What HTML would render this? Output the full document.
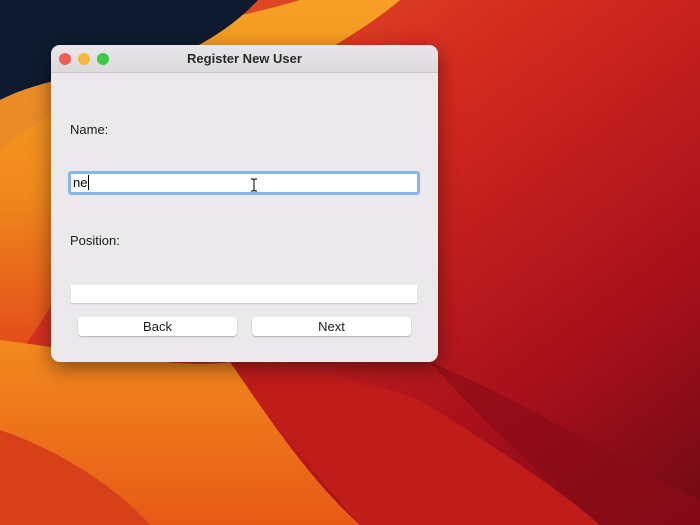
<!DOCTYPE html>
<html><head><meta charset="utf-8"><style>
html,body{margin:0;padding:0;width:700px;height:525px;overflow:hidden;font-family:"Liberation Sans",sans-serif}
#bg{position:absolute;left:0;top:0}
.win{position:absolute;left:51px;top:45px;width:387px;height:317px;background:#ebe9ec;border-radius:9px;box-shadow:0 6px 20px rgba(0,0,0,.45);overflow:hidden}
.tb{height:27px;background:linear-gradient(#e8e6e9,#dcdadd);border-bottom:1px solid #c9c7ca;text-align:center;font-weight:bold;font-size:13px;line-height:27px;color:#2a2a2a}
.dot{position:absolute;top:8px;width:12px;height:12px;border-radius:50%}
.lbl{position:absolute;font-size:13px;color:#1c1c1c}
.inp{position:absolute;background:#fff;box-sizing:border-box}
.btn{position:absolute;top:272px;width:159px;height:19px;background:#fff;border-radius:4px;box-shadow:0 1px 1.5px rgba(0,0,0,.25);text-align:center;font-size:13px;line-height:19px;color:#1c1c1c}
</style></head><body>
<svg id="bg" width="700" height="525" viewBox="0 0 700 525">
<defs>
<linearGradient id="r" x1="0" y1="0" x2="1" y2="1"><stop offset="0" stop-color="#e8602a"/><stop offset=".4" stop-color="#d42a1e"/><stop offset=".75" stop-color="#a8101c"/><stop offset="1" stop-color="#6e0a14"/></linearGradient>
<linearGradient id="o" x1="0" y1="0" x2="0" y2="1"><stop offset="0" stop-color="#f6a024"/><stop offset=".5" stop-color="#f08a1c"/><stop offset="1" stop-color="#e0401a"/></linearGradient>
<linearGradient id="b" x1="0" y1="0" x2="0" y2="1"><stop offset="0" stop-color="#f38a1e"/><stop offset="1" stop-color="#e85a16"/></linearGradient>
</defs>
<rect width="700" height="525" fill="url(#r)"/>
<path d="M0 60 C80 40 200 30 300 0 L400 0 C330 60 180 120 120 200 C70 270 40 330 0 380 Z" fill="url(#o)"/>
<path d="M0 0 L258 0 C230 30 200 45 170 60 C100 70 40 80 0 100 Z" fill="#0e1a30"/>
<path d="M0 100 C40 80 100 70 170 60 C110 80 50 110 0 150 Z" fill="#e88a2a" opacity=".8"/>
<path d="M0 340 C80 350 180 370 230 362 C270 420 310 480 360 525 L0 525 Z" fill="url(#b)"/>
<path d="M0 430 C60 450 120 490 150 525 L0 525 Z" fill="#d8401a"/>
<path d="M230 362 C300 365 360 380 420 400 C500 450 560 490 600 525 L360 525 C320 480 270 420 230 362Z" fill="#c01c1a"/>
<path d="M430 362 C520 400 620 460 700 500 L700 525 L600 525 C560 490 500 440 430 362Z" fill="#8a0c18" opacity=".7"/>
</svg>
<div class="win">
<div class="tb">Register New User</div>
<div class="dot" style="left:8px;background:#ed5f57"></div>
<div class="dot" style="left:27px;background:#f4b63b"></div>
<div class="dot" style="left:46px;background:#3ec946"></div>
<div class="lbl" style="left:19px;top:77px">Name:</div>
<div class="inp" style="left:17px;top:126px;width:352px;height:24px;border:3px solid #8ab4ec;border-radius:3px;font-size:13px;padding-left:2px;line-height:18px">ne<span style="border-left:1px solid #000;margin-left:1px"></span></div>
<svg style="position:absolute;left:199px;top:133px" width="8" height="14" viewBox="0 0 8 14"><path d="M1 1h2l1 1 1-1h2M4 2v10M1 13h2l1-1 1 1h2" stroke="#222" stroke-width="1.2" fill="none"/></svg>
<div class="lbl" style="left:19px;top:188px">Position:</div>
<div class="inp" style="left:20px;top:240px;width:346px;height:18px;box-shadow:0 1px 1px rgba(0,0,0,.15)"></div>
<div class="btn" style="left:27px">Back</div>
<div class="btn" style="left:201px">Next</div>
</div>
</body></html>
